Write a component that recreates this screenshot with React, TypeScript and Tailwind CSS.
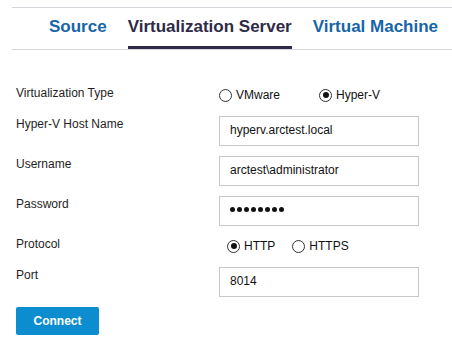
import React from 'react';

const font = { fontFamily: '"Liberation Sans", Arial, sans-serif' };

function Radio({ checked, label }: { checked?: boolean; label: string }) {
    return (
        <span className="flex items-center gap-[4px]">
            <span className="flex h-[13px] w-[13px] items-center justify-center rounded-full border border-[#333] bg-white">
                {checked && <span className="h-[6px] w-[6px] rounded-full bg-[#111]" />}
            </span>
            <span className="text-[12px] leading-4 text-[#111]">{label}</span>
        </span>
    );
}

function Field({ children }: { children: React.ReactNode }) {
    return (
        <div className="h-[30px] w-[200px] border border-[#c8c8c8] bg-white pl-[10px] pt-[5px] text-[12px] leading-4 text-[#111]">
            {children}
        </div>
    );
}

function Row({ label, tall, children }: { label: string; tall?: boolean; children: React.ReactNode }) {
    return (
        <div className={`flex items-start ${tall ? 'h-[30px]' : 'h-[21px]'}`}>
            <div className="w-[203px] text-[12px] leading-4 text-[#1e1e1e]">{label}</div>
            {children}
        </div>
    );
}

export default function App() {
    const tabs = [
        { name: 'Source', active: false },
        { name: 'Virtualization Server', active: true },
        { name: 'Virtual Machine', active: false },
    ];

    return (
        <div className="h-[363px] w-[452px] bg-white" style={font}>
            <div className="ml-[12px] pt-[7px]">
                <div className="flex h-[43px] gap-[21px] border-y border-[#d6d6dc] pl-[37px]">
                    {tabs.map((t) => (
                        <div
                            key={t.name}
                            className={`border-b-[3px] pt-[9px] pb-[9px] text-[17px] font-bold leading-[20px] ${
                                t.active ? 'border-[#2e2b48] text-[#2e2b48]' : 'border-transparent text-[#1665a9]'
                            }`}
                        >
                            {t.name}
                        </div>
                    ))}
                </div>
            </div>

            <div className="flex flex-col gap-[10px] pl-[16px] pt-[35px]">
                <Row label="Virtualization Type">
                    <div className="mt-[2px] flex">
                        <div className="w-[100px]">
                            <Radio label="VMware" />
                        </div>
                        <Radio checked label="Hyper-V" />
                    </div>
                </Row>
                <Row label="Hyper-V Host Name" tall>
                    <Field>hyperv.arctest.local</Field>
                </Row>
                <Row label="Username" tall>
                    <Field>arctest\administrator</Field>
                </Row>
                <Row label="Password" tall>
                    <Field>
                        <span className="mt-[5px] flex gap-[2px]">
                            {Array.from({ length: 8 }).map((_, i) => (
                                <span key={i} className="h-[5px] w-[5px] rounded-full bg-[#111]" />
                            ))}
                        </span>
                    </Field>
                </Row>
                <Row label="Protocol">
                    <div className="mt-[2px] flex gap-[17px] pl-[8px]">
                        <Radio checked label="HTTP" />
                        <Radio label="HTTPS" />
                    </div>
                </Row>
                <Row label="Port" tall>
                    <Field>8014</Field>
                </Row>
                <div>
                    <button className="h-[28px] w-[83px] rounded-[2px] bg-[#0b8dcf] text-[12px] font-bold text-white">
                        Connect
                    </button>
                </div>
            </div>
        </div>
    );
}
